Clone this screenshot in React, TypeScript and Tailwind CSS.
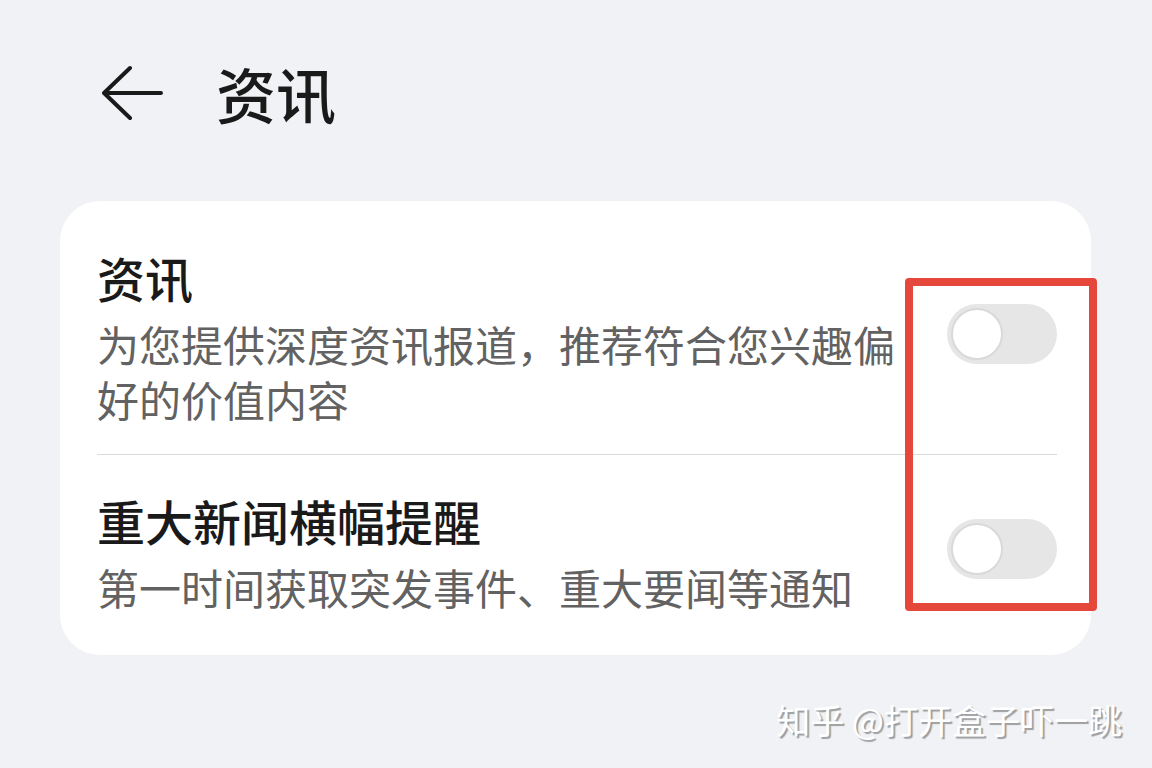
import React from 'react';

const Toggle = () => (
  <div className="flex h-[60px] w-[110px] shrink-0 items-center rounded-full bg-[#e6e6e6] pl-[4px]">
    <div className="h-[52px] w-[52px] rounded-full border-2 border-[#d9d9d9] bg-white" />
  </div>
);

const SettingRow = ({ title, desc, className }: { title: string; desc: string; className: string }) => (
  <div className={`flex items-center justify-between ${className}`}>
    <div className="w-[810px]">
      <h3 className="text-[48px] leading-[56px] font-medium text-[#1a1a1a]">{title}</h3>
      <p className="mt-[11px] text-[42px] leading-[55px] text-[#626262]">{desc}</p>
    </div>
    <div className="-mt-[8px]">
      <Toggle />
    </div>
  </div>
);

export default function App() {
  return (
    <div
      className="relative h-[768px] w-[1152px] overflow-hidden bg-[#f1f2f5]"
      style={{ fontFamily: '"Noto Sans CJK SC", "Noto Sans", sans-serif' }}
    >
      {/* 상단 헤더 */}
      <div className="flex h-[62px] items-center pl-[102px] mt-[62px]">
        <svg width="62" height="56" viewBox="0 0 62 56" fill="none" className="shrink-0">
          <path
            d="M28 3 L2 28 L28 53 M2 28 H59"
            stroke="#1a1a1a"
            strokeWidth="4"
            strokeLinecap="round"
            strokeLinejoin="round"
          />
        </svg>
        <h1 className="ml-[52px] text-[60px] leading-none font-medium text-[#1a1a1a]">资讯</h1>
      </div>

      <div className="relative ml-[60px] mt-[77px] w-[1031px] rounded-[40px] bg-white pl-[37px] pr-[34px]">
        <SettingRow
          title="资讯"
          desc="为您提供深度资讯报道，推荐符合您兴趣偏好的价值内容"
          className="pt-[48px] pb-[28px]"
        />
        <div className="h-px bg-[#dadada]" />
        <SettingRow
          title="重大新闻横幅提醒"
          desc="第一时间获取突发事件、重大要闻等通知"
          className="pt-[37px] pb-[41px]"
        />

        {/* annotation box */}
        <div className="absolute left-[845px] top-[77px] h-[333px] w-[192px] rounded-[4px] border-[8px] border-[#e5473b]" />
      </div>

      <div className="absolute right-[30px] top-[700px] text-[34px] leading-[40px] text-white [text-shadow:2px_2px_1px_rgba(0,0,0,0.35)]">
        知乎 @打开盒子吓一跳
      </div>
    </div>
  );
}
